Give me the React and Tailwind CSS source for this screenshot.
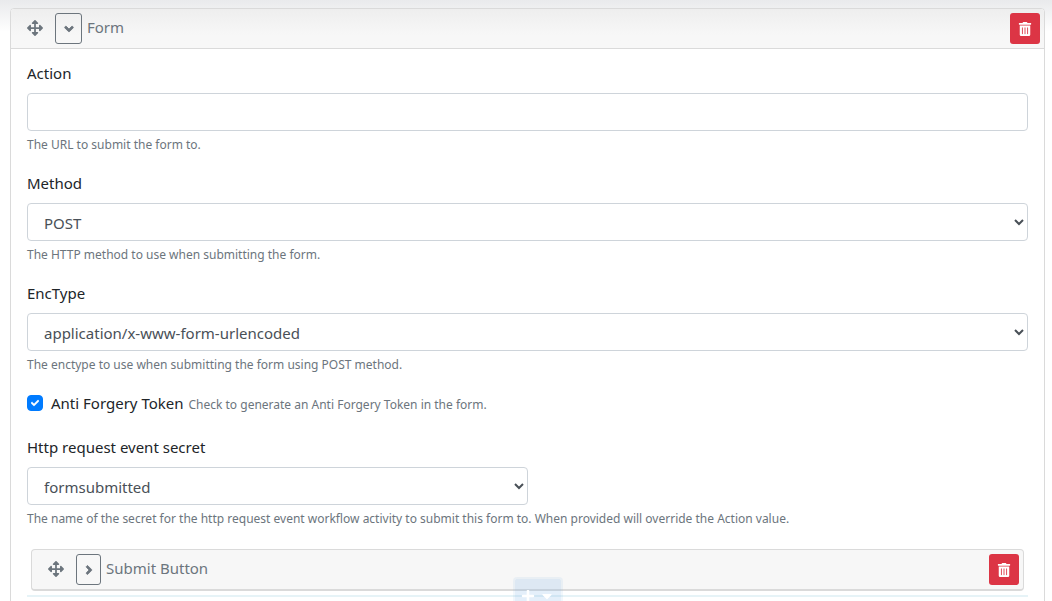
import { FaArrowsAlt, FaAngleDown, FaAngleRight, FaTrashAlt, FaPlus, FaCaretDown, FaCheck } from "react-icons/fa";

const control =
  "block h-[38px] rounded border border-[#ced4da] bg-white px-3 pt-0.5 text-[15px] text-[#495057]";

function Label({ htmlFor, children }) {
  return (
    <label htmlFor={htmlFor} className="mb-2 block leading-6">
      {children}
    </label>
  );
}

function Hint({ children }) {
  return <span className="mt-1 block text-xs leading-5 text-[#6c757d]">{children}</span>;
}

function SelectField({ id, label, value, hint, width }) {
  return (
    <div className="mb-4">
      <Label htmlFor={id}>{label}</Label>
      <select id={id} defaultValue={value} className={`${control} ${width}`}>
        <option>{value}</option>
      </select>
      <Hint>{hint}</Hint>
    </div>
  );
}

function WidgetHeader({ title, open }) {
  const Angle = open ? FaAngleDown : FaAngleRight;
  return (
    <div className="flex items-center text-[#6c757d]">
      <span className="mr-3 pb-0.5">
        <FaArrowsAlt className="size-4" />
      </span>
      <button
        type="button"
        aria-label={`Toggle ${title}`}
        className={`flex h-[31px] items-center justify-center rounded-[3px] border border-[#6c757d] pt-px ${open ? "w-[27px]" : "w-[25px]"}`}
      >
        <Angle className="size-[14px] stroke-current stroke-[28px]" />
      </button>
      <span className="ml-[5px] grow pb-[3px] leading-6">{title}</span>
      <button
        type="button"
        aria-label={`Delete ${title}`}
        className="flex h-[31px] w-[30px] items-center justify-center rounded-[3px] bg-[#dc3545] text-white"
      >
        <FaTrashAlt className="size-[14px]" />
      </button>
    </div>
  );
}

export default function App() {
  return (
    <div className="h-screen overflow-hidden bg-white bg-linear-to-b from-[#e9eaec] to-white to-[32px] pt-2 pr-[7px] pl-[10px] font-['Noto_Sans','Open_Sans',sans-serif] text-[15px] text-[#212529]">
      <section className="rounded border border-[#dadada] bg-white">
        <header className="rounded-t border-b border-[#dadada] bg-[#f7f7f7] bg-linear-to-b from-[#eeeeee] to-[#f7f7f7] to-[26px] py-1 pr-1 pl-4">
          <WidgetHeader title="Form" open />
        </header>
        <div className="px-4 pt-3">
          <div className="mb-4">
            <Label htmlFor="action">Action</Label>
            <input id="action" type="text" className={`${control} w-full`} />
            <Hint>The URL to submit the form to.</Hint>
          </div>
          <SelectField id="method" label="Method" value="POST" width="w-full" hint="The HTTP method to use when submitting the form." />
          <SelectField
            id="enctype"
            label="EncType"
            value="application/x-www-form-urlencoded"
            width="w-full"
            hint="The enctype to use when submitting the form using POST method."
          />
          <div className="mb-5 flex h-6 items-center">
            <span className="mr-2 grid size-4 place-items-center">
              <input
                id="token"
                type="checkbox"
                defaultChecked
                className="col-start-1 row-start-1 size-4 appearance-none rounded border border-[#007bff] bg-white checked:bg-[#007bff]"
              />
              <FaCheck className="pointer-events-none col-start-1 row-start-1 size-2 stroke-current stroke-[40px] text-white" />
            </span>
            <div className="flex items-baseline leading-6">
              <label htmlFor="token">Anti Forgery Token</label>
              <span className="ml-[5px] text-xs text-[#6c757d]">Check to generate an Anti Forgery Token in the form.</span>
            </div>
          </div>
          <SelectField
            id="secret"
            label="Http request event secret"
            value="formsubmitted"
            width="w-1/2"
            hint="The name of the secret for the http request event workflow activity to submit this form to. When provided will override the Action value."
          />
          <div className="relative h-24 pt-1">
            <div className="mx-1 rounded border border-b-2 border-[#dadada] bg-[#f7f7f7] py-1 pr-1 pl-4">
              <WidgetHeader title="Submit Button" />
            </div>
            <div className="mt-1 h-[2px] bg-[#e6f3f7]" />
            <button
              type="button"
              aria-label="Add widget"
              className="absolute top-8 left-1/2 ml-[-15px] flex h-[38px] w-[50px] items-center justify-center gap-1 rounded border-2 border-[#78afe6]/10 bg-[#78afe6]/20 bg-clip-padding text-white"
            >
              <FaPlus className="size-[14px]" />
              <FaCaretDown className="size-4" />
            </button>
          </div>
        </div>
      </section>
    </div>
  );
}
